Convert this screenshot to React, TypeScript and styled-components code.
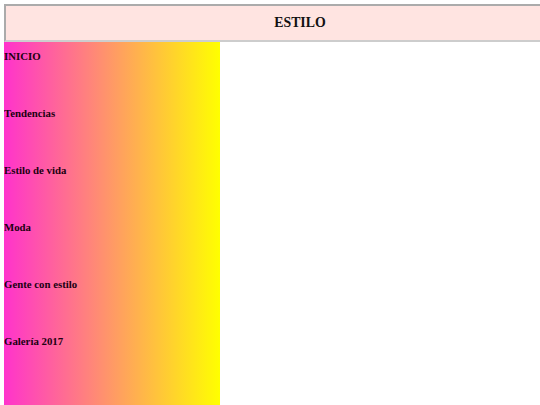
import React from "react";
import styled, { createGlobalStyle } from "styled-components";

const Global = createGlobalStyle`
  html, body { margin: 0; padding: 0; }
  html { overflow: hidden; }
  body {
    margin: 4px 0 0 4px;
    overflow: hidden;
    background: #ffffff;
    font-family: "Liberation Serif", "Times New Roman", serif;
  }
`;

const Page = styled.div`
  display: flex;
  flex-direction: column;
  width: 536px;
  height: 401px;
  overflow: hidden;
`;

const Header = styled.header`
  box-sizing: border-box;
  flex: none;
  width: 592px;
  height: 38px;
  border-style: solid;
  border-width: 2px;
  border-color: #ababab #cdcdcd #cdcdcd #ababab;
  background: #ffe4e1;
  display: flex;
  align-items: center;
  justify-content: center;
`;

const Title = styled.h1`
  margin: 0;
  font-size: 13.8px;
  font-weight: bold;
  color: #111;
  line-height: 1;
`;

const Sidebar = styled.nav`
  flex: 1;
  width: 216px;
  background: linear-gradient(to right, #ff33cc, #ffff00);
  display: flex;
  flex-direction: column;
  gap: 45px;
  padding-top: 8px;
  box-sizing: border-box;
`;

const Item = styled.a`
  display: block;
  font-size: 10.8px;
  line-height: 12px;
  font-weight: bold;
  color: #200010;
  text-decoration: none;
`;

const items = ["INICIO", "Tendencias", "Estilo de vida", "Moda", "Gente con estilo", "Galería 2017"];

export default function App() {
  return (
    <>
      <Global />
      <Page>
        <Header>
          <Title>ESTILO</Title>
        </Header>
        <Sidebar>
          {items.map((t) => (
            <Item key={t}>{t}</Item>
          ))}
        </Sidebar>
      </Page>
    </>
  );
}
